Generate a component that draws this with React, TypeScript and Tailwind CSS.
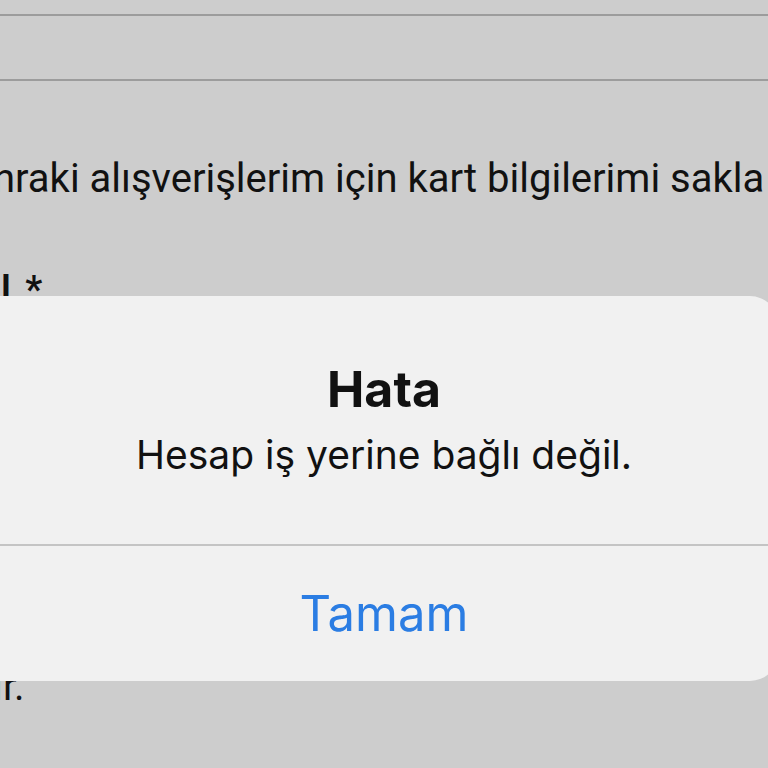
export default function App() {
  return (
    <div className="relative h-screen w-full overflow-hidden bg-[#cdcdcd] text-[#111111] font-['Roboto',sans-serif]">
      {/* Form behind the alert */}
      <div className="h-[14px]" />
      <div className="h-[2px] bg-[#9c9c9c]" />
      <div className="h-[63px]" />
      <div className="h-[2px] bg-[#9c9c9c]" />

      <p className="mt-[76px] ml-[-7px] whitespace-nowrap text-[40px] leading-[44px]">
        nraki alışverişlerim için kart bilgilerimi sakla
      </p>
      <p className="mt-[67px] ml-[1px] whitespace-nowrap text-[38px] font-semibold leading-[44px] [word-spacing:5px]">l *</p>
      <p className="mt-[353px] ml-[-7px] whitespace-nowrap text-[40px] leading-[44px]">ır.</p>

      {/* Alert */}
      <div className="absolute left-[-40px] right-[-10px] top-[296px] h-[385px] rounded-[28px] bg-[#f1f1f1] font-['Inter',sans-serif]">
        <div className="flex flex-col pl-[30px]">
          <div className="flex h-[248px] flex-col items-center pt-[64px]">
            <h2 className="text-[50px] font-bold leading-[58px] text-[#111111]">Hata</h2>
            <p className="mt-[14px] text-[39px] leading-[46px] text-[#111111]">Hesap iş yerine bağlı değil.</p>
          </div>
        </div>
        <div className="h-[2px] bg-[#c4c4c4]" />
        <div className="flex h-[135px] items-center justify-center pl-[30px]">
          <button className="text-[49px] leading-[58px] text-[#2b7de3]">Tamam</button>
        </div>
      </div>
    </div>
  );
}
